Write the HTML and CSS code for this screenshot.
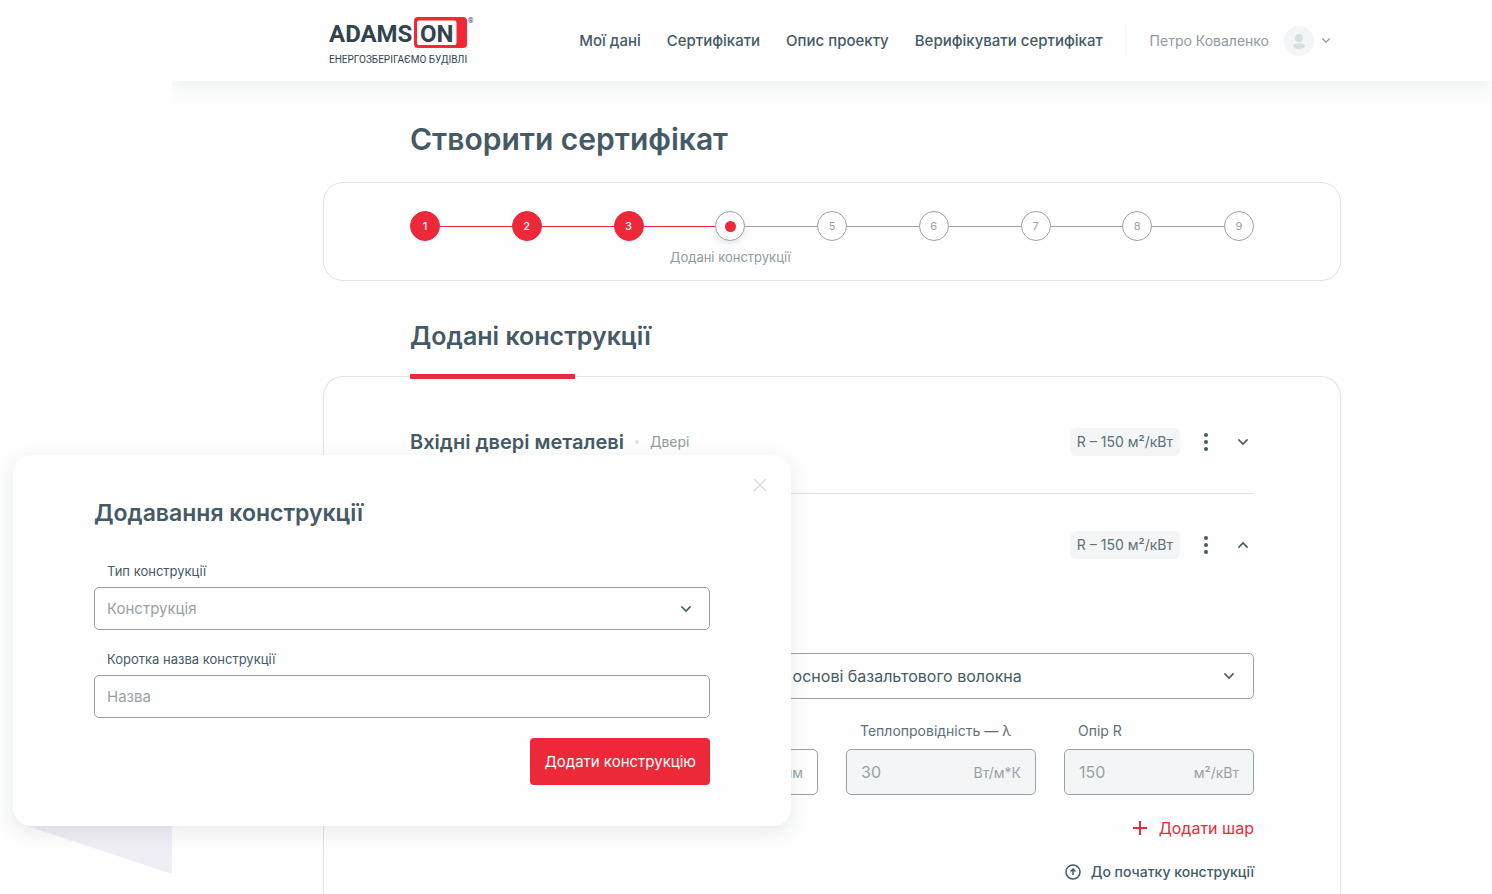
FILE: index.html
```html
<!DOCTYPE html>
<html lang="uk">
<head>
  <meta charset="UTF-8" />
  <meta name="viewport" content="width=device-width, initial-scale=1.0"/>
  <title>Створити сертифікат</title>
  <link rel="stylesheet" href="styles.css">
</head>
<body>
  <svg class="corner" viewBox="0 0 160 64" aria-hidden="true"><path d="M15 16V0h145v64z" fill="#efeef5"/></svg>

  <div class="page">
    <header class="header">
      <div class="header-inner">
        <a class="logo" href="#" aria-label="Adamson">
          <svg width="146" height="49" viewBox="0 0 146 49">
            <text class="logo-name" x="0" y="26">ADAMS</text>
            <path fill="#f32735" fill-rule="evenodd" d="M89 1h45a4 4 0 0 1 4 4v23a4 4 0 0 1-4 4H89a4 4 0 0 1-4-4V5a4 4 0 0 1 4-4zm1 3.500a2 2 0 0 0-2 2v20.500a2 2 0 0 0 2 2h35.500a2 2 0 0 0 2-2V6.500a2 2 0 0 0-2-2z"/>
            <text class="logo-name" x="91" y="26">ON</text>
            <text class="logo-reg" x="139" y="7">®</text>
            <text class="logo-sub" x="0" y="47">ЕНЕРГОЗБЕРІГАЄМО БУДІВЛІ</text>
          </svg>
        </a>
        <nav class="nav">
          <a href="#">Мої дані</a>
          <a href="#">Сертифікати</a>
          <a href="#">Опис проекту</a>
          <a href="#">Верифікувати сертифікат</a>
        </nav>
        <button class="user" type="button">
          <span>Петро Коваленко</span>
          <svg width="30" height="30" viewBox="0 0 30 30"><circle cx="15" cy="15" r="15" fill="#f3f5f6"/><circle cx="15" cy="12" r="4" fill="#d7dedf"/><ellipse cx="15" cy="20" rx="6" ry="3" fill="#d7dedf"/></svg>
          <svg class="chevron" width="8" height="5" viewBox="0 0 10 6"><path d="M1 1l4 4 4-4"/></svg>
        </button>
      </div>
    </header>

    <main class="main">
      <h1>Створити сертифікат</h1>
      <ol class="steps">
        <li class="done"><span>1</span></li>
        <li class="done"><span>2</span></li>
        <li class="done"><span>3</span></li>
        <li class="current"><span></span><em>Додані конструкції</em></li>
        <li><span>5</span></li>
        <li><span>6</span></li>
        <li><span>7</span></li>
        <li><span>8</span></li>
        <li><span>9</span></li>
      </ol>

      <h2>Додані конструкції</h2>
      <section class="card">
        <div class="row">
          <h3>Вхідні двері металеві</h3>
          <span class="kind">Двері</span>
          <span class="badge">R – 150 м²/кВт</span>
          <button class="icon-btn" type="button" aria-label="Меню"><svg width="4" height="18" viewBox="0 0 4 18"><circle cx="2" cy="2" r="2"/><circle cx="2" cy="9" r="2"/><circle cx="2" cy="16" r="2"/></svg></button>
          <button class="icon-btn" type="button" aria-label="Розгорнути"><svg class="chevron" width="10" height="6" viewBox="0 0 10 6"><path d="M1 1l4 4 4-4"/></svg></button>
        </div>
        <div class="row">
          <h3>Зовнішня стіна</h3>
          <span class="kind">Стіна</span>
          <span class="badge">R – 150 м²/кВт</span>
          <button class="icon-btn" type="button" aria-label="Меню"><svg width="4" height="18" viewBox="0 0 4 18"><circle cx="2" cy="2" r="2"/><circle cx="2" cy="9" r="2"/><circle cx="2" cy="16" r="2"/></svg></button>
          <button class="icon-btn" type="button" aria-label="Згорнути"><svg class="chevron" width="10" height="6" viewBox="0 0 10 6"><path d="M1 5l4-4 4 4"/></svg></button>
        </div>

        <form class="layer">
          <label class="layer-label" for="material">Матеріал</label>
          <div class="select">
            <select id="material">
              <option>Утеплювачі — мінеральна вата — плити НГ на основі базальтового волокна</option>
            </select>
            <svg class="chevron" width="10" height="6" viewBox="0 0 10 6"><path d="M1 1l4 4 4-4"/></svg>
          </div>
          <div class="params">
            <div>
              <label for="density">Густина</label>
              <div class="unit-field"><input type="text" id="density" value="30"></div>
            </div>
            <div>
              <label for="thickness">Товщина</label>
              <div class="unit-field"><input type="text" id="thickness"><span>мм</span></div>
            </div>
            <div>
              <label for="lambda">Теплопровідність — λ</label>
              <div class="unit-field disabled"><input type="text" id="lambda" value="30" disabled><span>Вт/м*К</span></div>
            </div>
            <div>
              <label for="resistance">Опір R</label>
              <div class="unit-field disabled"><input type="text" id="resistance" value="150" disabled><span>м²/кВт</span></div>
            </div>
          </div>
          <button class="add-layer" type="button">
            <svg width="14" height="14" viewBox="0 0 14 14"><path d="M7 0v14M0 7h14"/></svg>
            Додати шар
          </button>
          <a class="to-top" href="#">
            <svg width="16" height="16" viewBox="0 0 16 16"><circle cx="8" cy="8" r="7"/><path d="M8 11V6M5.500 7.500L8 5l2.500 2.500"/></svg>
            До початку конструкції
          </a>
        </form>
      </section>
    </main>
  </div>

  <div class="modal" role="dialog" aria-labelledby="modalTitle">
    <button class="close" type="button" aria-label="Закрити"><svg width="14" height="14" viewBox="0 0 14 14"><path d="M1 1l12 12M13 1L1 13"/></svg></button>
    <h2 id="modalTitle">Додавання конструкції</h2>
    <form>
      <label for="type">Тип конструкції</label>
      <div class="select">
        <select id="type">
          <option>Конструкція</option>
        </select>
        <svg class="chevron" width="10" height="6" viewBox="0 0 10 6"><path d="M1 1l4 4 4-4"/></svg>
      </div>
      <label for="name">Коротка назва конструкції</label>
      <input type="text" id="name" placeholder="Назва">
      <button class="submit" type="submit">Додати конструкцію</button>
    </form>
  </div>
</body>
</html>
```
FILE: styles.css
```css
* {
  box-sizing: border-box;
}
body {
  margin: 0;
  position: relative;
  background: #fefefe;
  font-family: Inter, "Noto Sans", sans-serif;
  font-size: 15px;
  color: #455a64;
}
h1, h2, h3 {
  margin: 0;
  font-weight: 600;
}
a {
  color: inherit;
  text-decoration: none;
}
button, input, select {
  font: inherit;
  color: inherit;
}
button {
  border: none;
  background: none;
  padding: 0;
  cursor: pointer;
}
svg {
  display: block;
  flex: none;
}
.chevron {
  fill: none;
  stroke: currentColor;
  stroke-width: 1.6;
  overflow: visible;
  stroke-linecap: square;
}
.corner {
  position: absolute;
  left: 12px;
  top: 810px;
  width: 160px;
}

/* page */
.page {
  margin-left: 172px;
  min-height: 100vh;
  display: flex;
  flex-direction: column;
  overflow: hidden;
}
.header {
  background: #fefefe;
  box-shadow: 0 8px 20px rgba(69, 90, 100, 0.08);
}
.header-inner {
  max-width: 1018px;
  height: 81px;
  margin: 0 auto;
  padding: 0 10px 0 6px;
  display: flex;
  align-items: center;
}
.logo-name {
  font: bold 24px Roboto, sans-serif;
  fill: #33444d;
}
.logo-sub {
  font: 10px Roboto, sans-serif;
  fill: #33444d;
}
.logo-reg {
  font: 7px Roboto, sans-serif;
  fill: #33444d;
}
.nav {
  margin-left: auto;
  display: flex;
  gap: 26px;
  font-weight: 500;
}
.user {
  height: 30px;
  margin-left: 22px;
  padding-left: 24px;
  border-left: 1px solid #f3f5f6;
  display: flex;
  align-items: center;
  font-size: 14px;
  color: #8f9b9f;
}
.user span {
  margin-right: 15px;
}
.user .chevron {
  margin: 0 1px 0 8px;
}

.main {
  width: 100%;
  max-width: 1018px;
  margin: 0 auto;
  flex: 1;
  display: flex;
  flex-direction: column;
}
h1 {
  margin: 38px 87px 23px;
  font-size: 30px;
  line-height: 40px;
}
.main h2 {
  margin: 36px 87px 20px;
  font-size: 25px;
  line-height: 39px;
}

/* steps */
.steps {
  list-style: none;
  margin: 0;
  padding: 28px 86px 39px;
  border: 1px solid #dfe3e4;
  border-radius: 20px;
  display: flex;
}
.steps li {
  flex: 1;
  display: flex;
  align-items: center;
  position: relative;
}
.steps li:last-child {
  flex: none;
}
.steps li::after {
  content: "";
  flex: 1;
  height: 1px;
  background: #98a2a6;
}
.steps li:last-child::after {
  display: none;
}
.steps li span {
  width: 30px;
  height: 30px;
  border: 1px solid #98a2a6;
  border-radius: 50%;
  display: flex;
  align-items: center;
  justify-content: center;
  font-size: 11px;
  color: #98a2a6;
}
.steps .done span {
  background: #ec2839;
  border-color: #ec2839;
  color: #fff;
  font-weight: 500;
}
.steps .done::after {
  background: #ec2839;
}
.steps .current span {
  box-shadow: 0 3px 6px rgba(69, 90, 100, 0.15);
}
.steps .current span::before {
  content: "";
  width: 11px;
  height: 11px;
  border-radius: 50%;
  background: #ec2839;
}
.steps em {
  position: absolute;
  left: 15px;
  top: 37px;
  transform: translateX(-50%);
  white-space: nowrap;
  font-style: normal;
  font-size: 13px;
  line-height: 18px;
  color: #8f9b9f;
}

/* constructions */
.card {
  flex: 1;
  position: relative;
  padding: 13px 86px 10px;
  border: 1px solid #dfe3e4;
  border-bottom: none;
  border-radius: 20px 20px 0 0;
}
.card::before {
  content: "";
  position: absolute;
  left: 86px;
  top: -3px;
  width: 165px;
  height: 5px;
  border-radius: 1px;
  background: #ec2839;
}
.row {
  height: 103px;
  display: flex;
  align-items: center;
}
.row + .row {
  border-top: 1px solid #dfe3e4;
}
.row h3 {
  font-size: 20px;
}
.kind {
  display: flex;
  align-items: center;
  margin-right: auto;
  font-size: 14px;
  color: #8f9b9f;
}
.kind::before {
  content: "";
  width: 4px;
  height: 4px;
  margin: 0 11px;
  border-radius: 50%;
  background: #dfe3e4;
}
.badge {
  margin-right: 12px;
  padding: 0 7px;
  border-radius: 6px;
  background: #f3f5f6;
  font-size: 14px;
  line-height: 28px;
  color: #5e7078;
}
.icon-btn {
  width: 28px;
  height: 28px;
  display: flex;
  align-items: center;
  justify-content: center;
  fill: #455a64;
}
.icon-btn + .icon-btn {
  margin-left: 9px;
  margin-right: -3px;
}

/* inputs */
.select {
  display: grid;
  align-items: center;
}
.select select {
  grid-area: 1 / 1;
  width: 100%;
  appearance: none;
  cursor: pointer;
}
.select .chevron {
  grid-area: 1 / 1;
  justify-self: end;
  margin-right: 20px;
  pointer-events: none;
}
.select select, .unit-field, .modal input {
  border: 1px solid #98a2a6;
  border-radius: 5px;
  background: #fefefe;
}
.layer {
  display: flex;
  flex-direction: column;
}
.layer label {
  display: block;
  padding-left: 14px;
  font-size: 14px;
  line-height: 20px;
  color: #5e7078;
}
.layer .layer-label {
  margin: 29px 0 8px;
}
.layer select {
  height: 46px;
  padding: 0 14px;
  font-size: 16px;
}
.params {
  display: grid;
  grid-template-columns: repeat(4, minmax(0, 1fr));
  gap: 28px;
  margin-top: 22px;
}
.unit-field {
  height: 46px;
  margin-top: 8px;
  padding: 0 14px;
  display: flex;
  align-items: center;
}
.unit-field input {
  flex: 1;
  min-width: 0;
  padding: 0;
  border: none;
  background: none;
  font-size: 16px;
}
.unit-field span, .disabled input {
  color: #98a2a6;
}
.unit-field span {
  font-size: 14px;
}
.unit-field.disabled {
  background: #f3f5f6;
}
.add-layer, .to-top {
  align-self: flex-end;
  display: flex;
  align-items: center;
  fill: none;
  line-height: 24px;
}
.add-layer {
  gap: 12px;
  margin: 21px 0 20px;
  font-size: 16px;
  color: #ec2839;
  stroke: #ec2839;
  stroke-width: 2;
}
.to-top {
  gap: 10px;
  font-size: 14px;
  font-weight: 500;
  stroke: #455a64;
  stroke-width: 1.5;
}

/* modal */
.modal {
  position: absolute;
  left: 13px;
  top: 455px;
  width: 778px;
  padding: 40px 81px 41px;
  border-radius: 18px;
  background: #fefefe;
  box-shadow: 0 6px 20px rgba(69, 90, 100, 0.12);
}
.modal h2 {
  font-size: 23px;
  line-height: 36px;
}
.close {
  position: absolute;
  right: 24px;
  top: 23px;
  fill: none;
  stroke: #d7dedf;
  stroke-width: 1.5;
}
.modal form {
  display: flex;
  flex-direction: column;
  margin-top: 29px;
}
.modal label {
  margin-bottom: 5px;
  padding-left: 13px;
  font-size: 13px;
  line-height: 22px;
}
.modal .select {
  margin-bottom: 18px;
}
.modal select, .modal input {
  height: 43px;
  padding: 0 12px;
}
.modal select, .modal input::placeholder {
  color: #98a2a6;
}
.modal .select .chevron {
  margin-right: 19px;
}
.submit {
  align-self: flex-end;
  height: 47px;
  margin-top: 20px;
  padding: 0 14px;
  border-radius: 4px;
  background: #ec2839;
  color: #fff;
}
```
